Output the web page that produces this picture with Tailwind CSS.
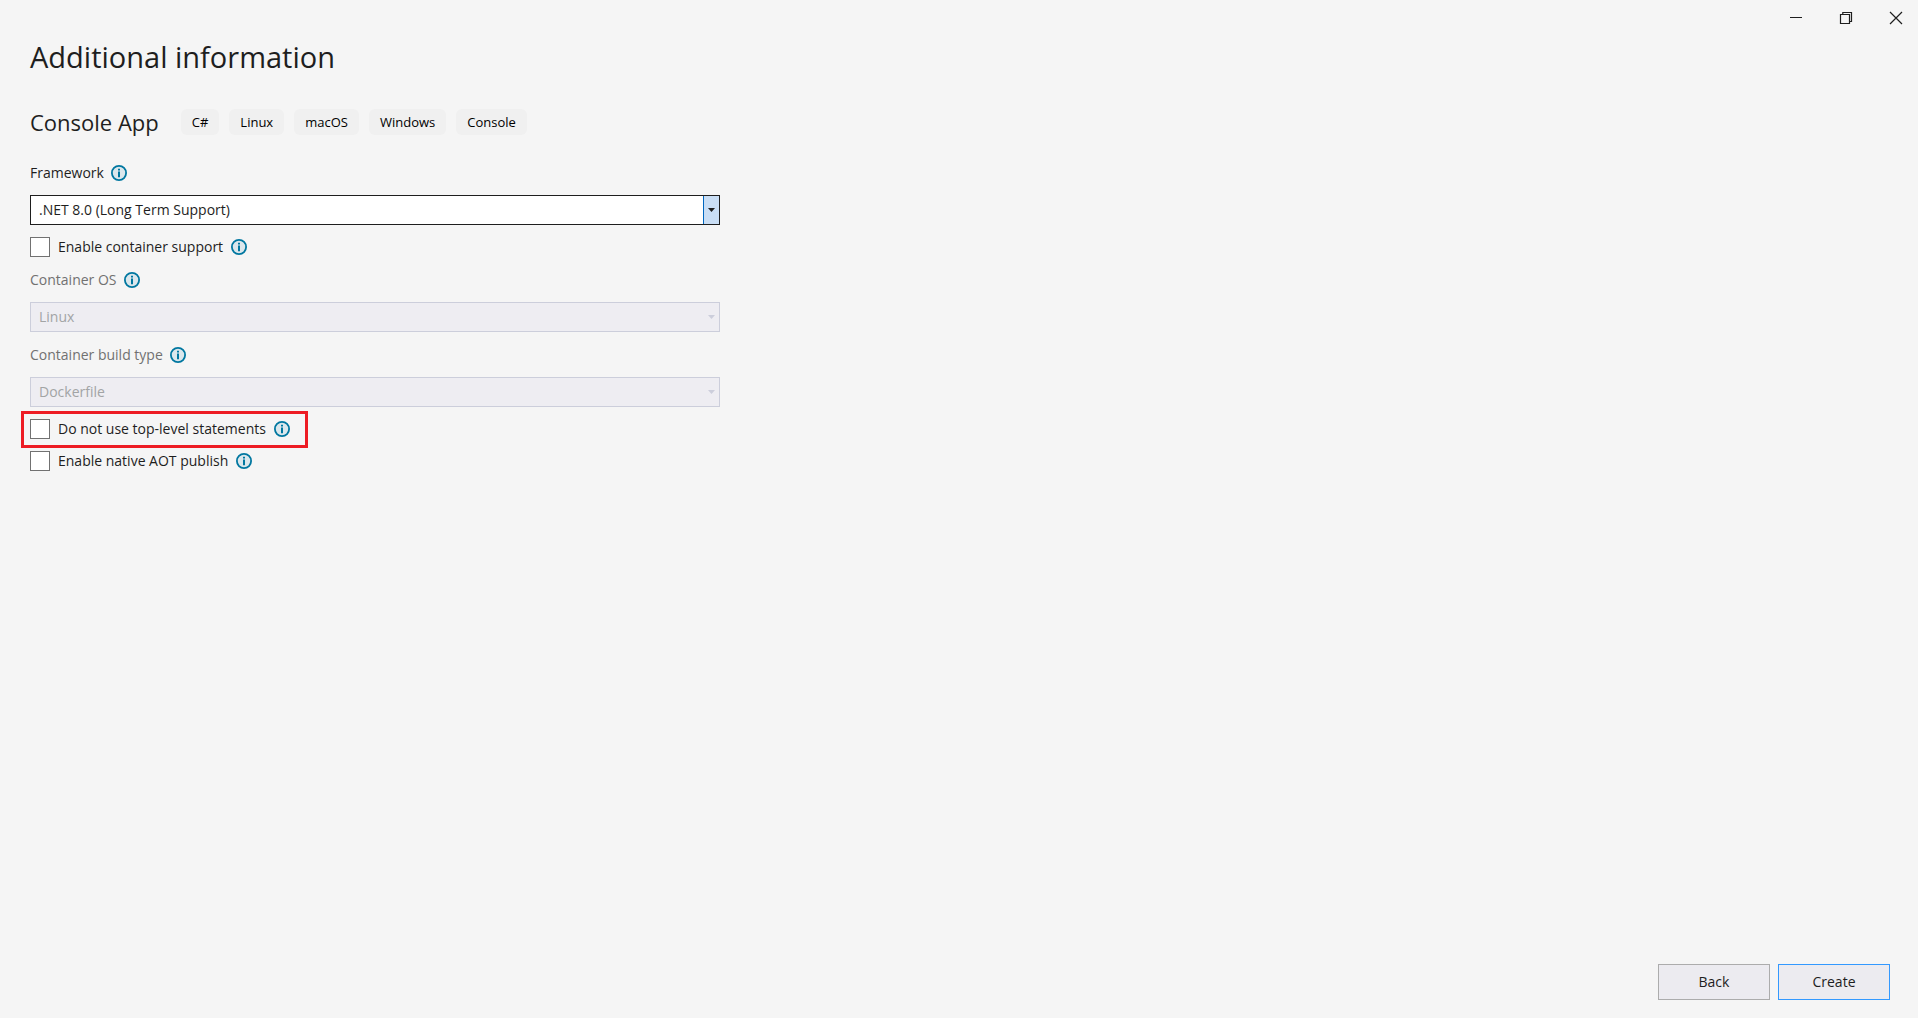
<!DOCTYPE html>
<html lang="en">
<head>
<meta charset="utf-8">
<title>Additional information</title>
<script src="https://cdn.jsdelivr.net/npm/@tailwindcss/browser@4"></script>
</head>
<body class="flex min-h-screen flex-col bg-[#f5f5f5] font-['Segoe_UI','Open_Sans',sans-serif] text-sm leading-5 text-[#1e1e1e]">
<svg class="hidden" aria-hidden="true">
  <symbol id="info" viewBox="0 0 16 16">
    <circle cx="8" cy="8" r="7.100" fill="#dbe7ec" stroke="#0077a0" stroke-width="1.8"/>
    <path d="M7 3.8h2v1.7H7zM7 6.6h2v5.6H7z" fill="#0077a0"/>
  </symbol>
</svg>
<header class="flex h-9 justify-end gap-1.5">
  <button aria-label="Minimize" class="flex w-11 items-center justify-center"><svg class="size-4" viewBox="0 0 16 16"><path d="M2 7.5h12" stroke="#1e1e1e" fill="none"/></svg></button>
  <button aria-label="Restore" class="flex w-11 items-center justify-center"><svg class="size-4" viewBox="0 0 16 16" fill="none" stroke="#1e1e1e" stroke-width="1.2"><path d="M2.5 4.5h9v9h-9z"/><path d="M4.8 4.5v-2h8.700v9h-2"/></svg></button>
  <button aria-label="Close" class="flex w-11 items-center justify-center"><svg class="size-4" viewBox="0 0 16 16"><path d="M2 2l12 12M14 2L2 14" stroke="#1e1e1e" stroke-width="1.2" fill="none"/></svg></button>
</header>
<main class="flex-1 px-[30px]">
  <h1 class="text-[29px] leading-[42px]">Additional information</h1>
  <div class="mt-[31px] flex h-[26px] items-center">
    <h2 class="mr-[22px] text-[22px] leading-[26px]">Console App</h2>
    <ul class="flex gap-2.5 text-[13px] leading-[26px] text-black">
      <li class="rounded-md bg-[#f0f0f0] px-[11px]">C#</li>
      <li class="rounded-md bg-[#f0f0f0] px-[11px]">Linux</li>
      <li class="rounded-md bg-[#f0f0f0] px-[11px]">macOS</li>
      <li class="rounded-md bg-[#f0f0f0] px-[11px]">Windows</li>
      <li class="rounded-md bg-[#f0f0f0] px-[11px]">Console</li>
    </ul>
  </div>
  <form class="max-w-[690px]">
    <div class="mt-7 flex items-center gap-[7px]">
      <label for="framework">Framework</label>
      <svg class="size-4"><use href="#info"/></svg>
    </div>
    <div class="relative mt-3">
      <select id="framework" class="block h-[30px] w-full appearance-none border border-[#1e1e1e] bg-white pl-2"><option>.NET 8.0 (Long Term Support)</option></select>
      <span class="pointer-events-none absolute inset-y-px right-px flex w-4 items-center justify-center border-l border-[#0067c0] bg-[#c9def5]"><svg class="h-1 w-[7px]" viewBox="0 0 7 4"><path d="M0 0h7L3.500 4z" fill="#1e1e1e"/></svg></span>
    </div>
    <div class="mt-3 flex items-center gap-2">
      <input id="container" type="checkbox" class="size-5 appearance-none border border-[#717171] bg-white">
      <label for="container">Enable container support</label>
      <svg class="size-4"><use href="#info"/></svg>
    </div>
    <div class="mt-[13px] flex items-center gap-[7px] text-[#717171]">
      <label for="os">Container OS</label>
      <svg class="size-4"><use href="#info"/></svg>
    </div>
    <div class="relative mt-3">
      <select id="os" disabled class="block h-[30px] w-full appearance-none border border-[#cccedb] bg-[#eeedf2] pl-2 text-[#a2a4a5] opacity-100"><option>Linux</option></select>
      <span class="pointer-events-none absolute inset-y-px right-px flex w-4 items-center justify-center"><svg class="h-1 w-[7px]" viewBox="0 0 7 4"><path d="M0 0h7L3.500 4z" fill="#cccedb"/></svg></span>
    </div>
    <div class="mt-[13px] flex items-center gap-[7px] text-[#717171]">
      <label for="build">Container build type</label>
      <svg class="size-4"><use href="#info"/></svg>
    </div>
    <div class="relative mt-3">
      <select id="build" disabled class="block h-[30px] w-full appearance-none border border-[#cccedb] bg-[#eeedf2] pl-2 text-[#a2a4a5] opacity-100"><option>Dockerfile</option></select>
      <span class="pointer-events-none absolute inset-y-px right-px flex w-4 items-center justify-center"><svg class="h-1 w-[7px]" viewBox="0 0 7 4"><path d="M0 0h7L3.500 4z" fill="#cccedb"/></svg></span>
    </div>
    <div class="mt-1 -ml-[9px] flex w-fit items-center gap-2 border-3 border-[#ed1c24] pt-[5px] pr-[15px] pb-1.5 pl-1.5">
      <input id="toplevel" type="checkbox" class="size-5 appearance-none border border-[#717171] bg-white">
      <label for="toplevel">Do not use top-level statements</label>
      <svg class="size-4"><use href="#info"/></svg>
    </div>
    <div class="mt-[3px] flex items-center gap-2">
      <input id="aot" type="checkbox" class="size-5 appearance-none border border-[#717171] bg-white">
      <label for="aot">Enable native AOT publish</label>
      <svg class="size-4"><use href="#info"/></svg>
    </div>
  </form>
</main>
<footer class="flex justify-end gap-2 pr-7 pb-[18px]">
  <button class="h-9 w-28 border border-[#acacac] bg-[#ecebf0]">Back</button>
  <button class="h-9 w-28 border border-[#3399ff] bg-[#ecebf0]">Create</button>
</footer>
</body>
</html>
